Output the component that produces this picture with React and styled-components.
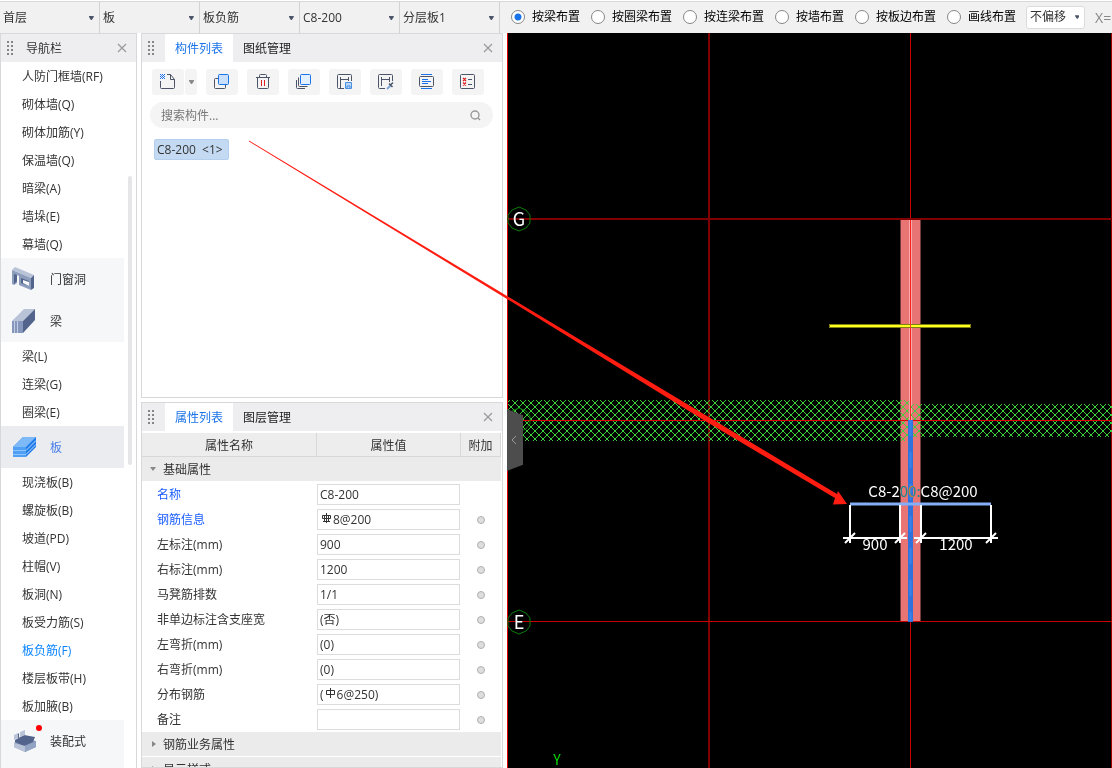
import React, { useState } from 'react'
import styled, { createGlobalStyle } from 'styled-components'

const GlobalStyle = createGlobalStyle`
    * {
        box-sizing: border-box;
    }

    body {
        margin: 0;
        background: #fff;
        overflow: hidden;
    }

    body, input, select, button {
        font-family: "Open Sans", "Noto Sans CJK SC", sans-serif;
        font-size: 12px;
        line-height: 18px;
        color: #333;
    }
`

const levels = [
    ['楼层', '首层'],
    ['构件类型', '板'],
    ['构件', '板负筋'],
    ['名称', 'C8-200'],
    ['分层', '分层板1'],
]

const modes = ['按梁布置', '按圈梁布置', '按连梁布置', '按墙布置', '按板边布置', '画线布置']

const navItems = [
    { text: '人防门框墙(RF)' },
    { text: '砌体墙(Q)' },
    { text: '砌体加筋(Y)' },
    { text: '保温墙(Q)' },
    { text: '暗梁(A)' },
    { text: '墙垛(E)' },
    { text: '幕墙(Q)' },
    { text: '门窗洞', icon: 'opening' },
    { text: '梁', icon: 'beam' },
    { text: '梁(L)' },
    { text: '连梁(G)' },
    { text: '圈梁(E)' },
    { text: '板', icon: 'slab', open: true },
    { text: '现浇板(B)' },
    { text: '螺旋板(B)' },
    { text: '坡道(PD)' },
    { text: '柱帽(V)' },
    { text: '板洞(N)' },
    { text: '板受力筋(S)' },
    { text: '板负筋(F)', active: true },
    { text: '楼层板带(H)' },
    { text: '板加腋(B)' },
    { text: '装配式', icon: 'prefab', badge: true },
    { text: '', icon: 'none' },
]

const properties = [
    { name: '名称', value: 'C8-200', link: true, noDot: true },
    { name: '钢筋信息', value: '8@200', link: true, rebar: 'C' },
    { name: '左标注(mm)', value: '900' },
    { name: '右标注(mm)', value: '1200' },
    { name: '马凳筋排数', value: '1/1' },
    { name: '非单边标注含支座宽', value: '(否)' },
    { name: '左弯折(mm)', value: '(0)' },
    { name: '右弯折(mm)', value: '(0)' },
    { name: '分布钢筋', value: '6@250)', prefix: '(', rebar: 'A' },
    { name: '备注', value: '' },
]

/* ---------- icons ---------- */

const Caret = ({ color = '#4c5568' }) => (
    <svg width="5" height="4" viewBox="0 0 5 4"><path d="M0 0H5V1L3 4H2L0 1Z" fill={color} /></svg>
)

const CloseIcon = () => (
    <svg width="10" height="10" viewBox="0 0 10 10"><path d="M1 1L9 9M9 1L1 9" stroke="#999" strokeWidth="1.2" /></svg>
)

const Grip = () => (
    <svg width="7" height="15" viewBox="0 0 7 15" fill="#858585">
        {[0, 4, 8, 12].map((y) => (
            <React.Fragment key={y}>
                <rect x="0" y={y} width="2" height="2" />
                <rect x="4" y={y} width="2" height="2" />
            </React.Fragment>
        ))}
    </svg>
)

const toolIcons = {
    new: (
        <>
            <path d="M7 0.5H10.5L14.5 5.5V13.5Q14.5 14.5 13.5 14.5H1.5Q0.5 14.5 0.5 13.5V7" />
            <path d="M10.5 0.5V5.5H14.5" />
            <path d="M0 0.5H5M0 2.5H5M0 4.5H5" stroke="#1a73e8" strokeDasharray="1 1" />
            <path d="M1 1.5H5M1 3.5H5" stroke="#1a73e8" strokeDasharray="1 1" />
        </>
    ),
    copy: (
        <>
            <path d="M4.5 4.5H1.5Q0.5 4.5 0.5 5.5V13.5Q0.5 14.5 1.5 14.5H10.5Q11.5 14.5 11.5 13.5V10.5" />
            <rect x="4.5" y="0.5" width="10" height="10" rx="1" fill="#c9dffa" stroke="#1a73e8" />
        </>
    ),
    remove: (
        <>
            <path d="M1 3.5H15M4.5 3V1.5Q4.5 0.5 5.5 0.5H10.5Q11.5 0.5 11.5 1.5V3" />
            <path d="M2.5 4V13.5Q2.5 14.5 3.5 14.5H12.5Q13.5 14.5 13.5 13.5V4" />
            <path d="M6.5 6V12M9.5 6V12" stroke="#e02020" />
        </>
    ),
    layers: (
        <>
            <rect x="4.5" y="0.5" width="10" height="10" rx="1" fill="#e3f0ff" stroke="#1a73e8" />
            <path d="M2.5 3.5V11.5Q2.5 12.5 3.5 12.5H11.5M0.5 6V13.5Q0.5 14.5 1.5 14.5H9" />
        </>
    ),
    save: (
        <>
            <path d="M7 14.5H1.5Q0.5 14.5 0.5 13.5V1.5Q0.5 0.5 1.5 0.5H13.5Q14.5 0.5 14.5 1.5V7" />
            <path d="M3.5 3V15M3.5 5.5H11.5M11.5 3V7" />
            <path d="M8.5 8.5H14.5V14.5H8.5ZM10 14V12H13V14" fill="#b9d5f8" stroke="#4a90e2" />
        </>
    ),
    pick: (
        <>
            <path d="M7 14.5H1.5Q0.5 14.5 0.5 13.5V1.5Q0.5 0.5 1.5 0.5H13.5Q14.5 0.5 14.5 1.5V7" />
            <path d="M3.5 3V12M3.5 5.5H11.5M11.5 3V8" />
            <path d="M9 15L13 11" stroke="#7fa5d8" strokeWidth="2" />
            <path d="M11 9.5L14.5 13M12.5 11L15 8.5" strokeWidth="1.5" />
        </>
    ),
    align: (
        <>
            <rect x="0.5" y="2.5" width="14" height="10" rx="1" />
            <path d="M2 0.5H13M2 14.5H13M3 5.5H9M3 7.5H12M3 9.5H9" stroke="#1a73e8" />
        </>
    ),
    check: (
        <>
            <rect x="0.5" y="0.5" width="14" height="14" rx="1" />
            <path d="M3 4L6 7M6 4L3 7M3 8.5L6 11.5M6 8.5L3 11.5" stroke="#e02020" strokeWidth="1.3" />
            <path d="M8 5.5H12M8 10.5H12" />
        </>
    ),
}

const ToolIcon = ({ name }) => (
    <svg width="16" height="16" viewBox="0 0 16 16" fill="none" stroke="#4c5568">{toolIcons[name]}</svg>
)

const navIcons = {
    opening: (
        <>
            <path d="M0 3L3 0L22 8L19 11Z" fill="#b9c3d8" />
            <path d="M0 3L19 11V23L7 18V9L5 8V16L2 18L0 17Z" fill="#8c9cbd" />
            <path d="M19 11L22 8V21L19 23Z" fill="#53648c" />
            <path d="M2 7L5 8V14L2 17ZM9 11L17 14V19L9 16Z" fill="#53648c" />
            <path d="M11 13L17 15V19L11 16Z" fill="#f5f7f9" />
        </>
    ),
    beam: (
        <>
            <path d="M0 12L12 0H23L11 12Z" fill="#b9c3d8" />
            <path d="M11 12L23 0V11L11 24Z" fill="#53648c" />
            <path d="M0 12H11V24H0Z" fill="#8496bc" />
            <path d="M2.5 12V24M5.5 12V24" stroke="#c3cde2" />
        </>
    ),
    slab: (
        <>
            <path d="M1 12L11 2H24V12L14 22H1Z" fill="#1f7bea" />
            <path d="M1 12L11 2H24L14 12Z" fill="#7db8f7" />
            <path d="M1 12H14V22H1Z" fill="#4f9ff5" />
            <path d="M1 15.5H14M1 19.5H14" stroke="#8cc4fb" fill="none" />
            <path d="M14 15.5L24 5.5M14 19.5L24 9.5" stroke="#b6dafc" fill="none" />
        </>
    ),
    prefab: (
        <>
            <path d="M2 14L9 9L24 12V18L13 23L2 18Z" fill="#8c9cbd" />
            <path d="M3 11L12 6L23 8L21 13L12 17L3 13Z" fill="#53648c" />
            <path d="M2 14L13 17V23L2 18Z" fill="#b9c3d8" />
            <path d="M13 17L24 13V18L13 23Z" fill="#93a3c4" />
            <path d="M2 6L6 4V9L2 11ZM8 3L13 1V6L8 8Z" fill="#b9c3d8" />
            <path d="M6 4L7 5V9L6 9Z" fill="#53648c" />
        </>
    ),
}

const NavIcon = ({ name }) => (
    <svg width="24" height="24" viewBox="0 0 24 24">{navIcons[name]}</svg>
)

const RebarIcon = ({ grade }) => (
    <svg width="11" height="14" viewBox="0 0 11 14" fill="none" stroke="#333">
        {grade === 'C' ? (
            <path d="M1.5 2.5H9.5V5.5H1.5ZM5.5 0V10M3.5 2V8M7.5 2V8M2 8.5H9" />
        ) : (
            <path d="M1.5 2.5H9.5V6.5H1.5ZM5.5 0V10" />
        )}
    </svg>
)

/* ---------- top bar ---------- */

function TopBar() {
    const [mode, setMode] = useState(modes[0])
    return (
        <Bar>
            {levels.map(([label, value]) => (
                <LevelBox key={label}>
                    <Select aria-label={label} defaultValue={value}>
                        <option>{value}</option>
                    </Select>
                    <Caret />
                </LevelBox>
            ))}
            <Modes>
                {modes.map((m) => (
                    <Mode key={m}>
                        <input type="radio" name="mode" checked={mode === m} onChange={() => setMode(m)} />
                        {m}
                    </Mode>
                ))}
            </Modes>
            <OffsetBox>
                <Select aria-label="偏移" defaultValue="不偏移">
                    <option>不偏移</option>
                </Select>
                <Caret />
            </OffsetBox>
            <AxisLabel>X=</AxisLabel>
        </Bar>
    )
}

/* ---------- navigation ---------- */

function Navigation() {
    return (
        <NavPanel>
            <PanelHeader>
                <Grip />
                <PanelTitle>导航栏</PanelTitle>
                <CloseButton aria-label="关闭"><CloseIcon /></CloseButton>
            </PanelHeader>
            <NavList>
                {navItems.map((item, i) => item.icon ? (
                    <NavGroup key={i} $open={item.open}>
                        <NavIcon name={item.icon} />
                        <span>{item.text}</span>
                        {item.badge && <Badge />}
                    </NavGroup>
                ) : (
                    <NavItem key={i} $active={item.active}>{item.text}</NavItem>
                ))}
                <ScrollThumb />
            </NavList>
        </NavPanel>
    )
}

/* ---------- middle panels ---------- */

function Tabs({ tabs }) {
    return (
        <PanelHeader>
            <Grip />
            <TabList>
                {tabs.map((tab, i) => <Tab key={tab} $active={i === 0}>{tab}</Tab>)}
            </TabList>
            <CloseButton aria-label="关闭"><CloseIcon /></CloseButton>
        </PanelHeader>
    )
}

function ComponentPanel() {
    return (
        <Panel>
            <Tabs tabs={['构件列表', '图纸管理']} />
            <Toolbar>
                <SplitButton>
                    <ToolButton aria-label="新建"><ToolIcon name="new" /></ToolButton>
                    <DropButton aria-label="更多"><Caret color="#8a8a8a" /></DropButton>
                </SplitButton>
                <ToolButton aria-label="复制"><ToolIcon name="copy" /></ToolButton>
                <ToolButton aria-label="删除"><ToolIcon name="remove" /></ToolButton>
                <ToolButton aria-label="层间复制"><ToolIcon name="layers" /></ToolButton>
                <ToolButton aria-label="存档"><ToolIcon name="save" /></ToolButton>
                <ToolButton aria-label="提取"><ToolIcon name="pick" /></ToolButton>
                <ToolButton aria-label="排序"><ToolIcon name="align" /></ToolButton>
                <ToolButton aria-label="检查"><ToolIcon name="check" /></ToolButton>
            </Toolbar>
            <Search>
                <input type="text" aria-label="搜索构件" placeholder="搜索构件..." />
                <svg width="11" height="12" viewBox="0 0 11 12" fill="none" stroke="#999" strokeWidth="1.4">
                    <circle cx="5" cy="6" r="4" />
                    <path d="M8 9L10 11" />
                </svg>
            </Search>
            <ComponentItem>C8-200 &nbsp;&lt;1&gt;</ComponentItem>
        </Panel>
    )
}

function PropertyPanel() {
    return (
        <Panel>
            <Tabs tabs={['属性列表', '图层管理']} />
            <PropertyTable>
                <colgroup>
                    <col />
                    <col width="144" />
                    <col width="40" />
                </colgroup>
                <thead>
                    <tr>
                        <th>属性名称</th>
                        <th>属性值</th>
                        <th>附加</th>
                    </tr>
                </thead>
                <tbody>
                    <GroupRow>
                        <td colSpan="3">
                            <svg width="8" height="8" viewBox="0 0 8 8"><path d="M1 1H7L4 5Z" fill="#888" /></svg>
                            基础属性
                        </td>
                    </GroupRow>
                    {properties.map((p, i) => (
                        <tr key={p.name}>
                            <NameCell $link={p.link}><label htmlFor={`prop-${i}`}>{p.name}</label></NameCell>
                            <td>
                                <ValueBox>
                                    {p.prefix}
                                    {p.rebar && <RebarIcon grade={p.rebar} />}
                                    <input id={`prop-${i}`} type="text" defaultValue={p.value} />
                                </ValueBox>
                            </td>
                            <td>{!p.noDot && <Dot />}</td>
                        </tr>
                    ))}
                    {['钢筋业务属性', '显示样式'].map((name) => (
                        <GroupRow key={name}>
                            <td colSpan="3">
                                <svg width="8" height="8" viewBox="0 0 8 8"><path d="M3 0L7 3L3 6Z" fill="#888" /></svg>
                                {name}
                            </td>
                        </GroupRow>
                    ))}
                </tbody>
            </PropertyTable>
        </Panel>
    )
}

/* ---------- drawing ---------- */

const AxisBubble = ({ y, children }) => (
    <g>
        <polygon
            points={`12,${y - 12} 19,${y - 9} 23,${y - 4} 23,${y + 4} 19,${y + 9} 12,${y + 12} 5,${y + 9} 1,${y + 4} 1,${y - 4} 5,${y - 9}`}
            fill="none"
            stroke="#0a7d0a"
        />
        <text x="12" y={y + 7} textAnchor="middle" fontSize="18" fill="#fff">{children}</text>
    </g>
)

function Drawing() {
    return (
        <Canvas>
            <svg width="100%" height="100%">
                <defs>
                    <pattern id="hatch" width="8" height="8" x="0" y="2" patternUnits="userSpaceOnUse">
                        <path d="M0 0L8 8M8 0L0 8" stroke="#3cd03c" strokeWidth="1" shapeRendering="crispEdges" />
                    </pattern>
                </defs>
                <rect width="1" height="100%" fill="#e00000" />
                <rect x="201" width="2" height="100%" fill="#800000" />
                <rect x="403" width="1" height="100%" fill="#c80000" />
                <rect x="604" width="1" height="100%" fill="#a00000" />

                <rect x="393" y="186" width="21" height="403" fill="#733a3a" />
                <rect x="394" y="186" width="19" height="403" fill="#e87474" />
                <rect x="402" y="186" width="3" height="202" fill="#f8a8a8" />
                <rect x="403" y="186" width="1" height="202" fill="#ff2020" />

                <rect x="1" y="367" width="401" height="41" fill="url(#hatch)" />
                <rect x="404" y="371" width="100%" height="33" fill="url(#hatch)" />

                <rect y="185" width="100%" height="2" fill="#800000" />
                <rect y="387" width="100%" height="1" fill="#e00000" />
                <rect y="588" width="100%" height="1" fill="#c80000" />

                <rect x="401" y="387" width="5" height="202" fill="#2f72dc" />
                <path d="M403.5 387V588" stroke="#3884ea" strokeWidth="2" strokeDasharray="16 16" />

                <path d="M322 293H464" stroke="#808010" strokeWidth="4" />
                <path d="M323 293H463" stroke="#ffff20" strokeWidth="2" />
                <rect x="403" y="291" width="1" height="4" fill="#ff4020" />

                <path d="M343 471H484" stroke="#84aef8" strokeWidth="3" />
                <g stroke="#fff" strokeWidth="2">
                    <path d="M343 472V510M393 472V510M414 472V510M484 472V510" />
                    <path d="M336 505H400M407 505H491" />
                    <path d="M338 510L348 500M388 510L398 500M409 510L419 500M479 510L489 500" />
                </g>

                <AxisBubble y={186}>G</AxisBubble>
                <AxisBubble y={387} />
                <AxisBubble y={589}>E</AxisBubble>

                <DimText x="416" y="464">C8-200:C8@200</DimText>
                <DimText x="368" y="517">900</DimText>
                <DimText x="449" y="517">1200</DimText>
                <text x="50" y="732" textAnchor="middle" fontSize="14" fill="#00e000">Y</text>
            </svg>
            <Collapse aria-label="收起">
                <svg width="6" height="10" viewBox="0 0 6 10" fill="none" stroke="#999"><path d="M5 1L1 5L5 9" /></svg>
            </Collapse>
        </Canvas>
    )
}

function App() {
    return (
        <Page>
            <GlobalStyle />
            <TopBar />
            <Navigation />
            <Middle>
                <ComponentPanel />
                <PropertyPanel />
            </Middle>
            <Drawing />
            <Pointer width="860" height="520" fill="#ff1d12">
                <path d="M249 140.5L507 296L837 494L838 491L847 504L833 504.5L835 498L706 421.5L507 299L249 141.5Z" />
            </Pointer>
        </Page>
    )
}

export default App

const Page = styled.div`
    position: relative;
    display: grid;
    grid-template-columns: 137px 362px minmax(0, 1fr);
    grid-template-rows: 33px minmax(0, 1fr);
    column-gap: 4px;
    height: 100vh;
`

const Bar = styled.header`
    grid-column: 1 / -1;
    display: flex;
    align-items: center;
    margin-top: 1px;
    background: #f1f1f1;
    border-top: 1px solid #d6dad8;
    overflow: hidden;
    white-space: nowrap;
`

const Select = styled.select`
    appearance: none;
    width: 100%;
    border: 0;
    padding: 0;
    background: transparent;
    outline: none;
`

const LevelBox = styled.div`
    flex: none;
    display: flex;
    align-items: center;
    width: 100px;
    height: 100%;
    padding: 0 5px 0 3px;
    border-right: 1px solid #d2d2d2;
`

const Modes = styled.div`
    display: flex;
    gap: 11px;
    padding: 0 10px 2px 11px;
`

const Mode = styled.label`
    display: flex;
    align-items: center;
    gap: 7px;
    color: #000;

    input {
        appearance: none;
        width: 14px;
        height: 14px;
        margin: 0;
        border: 1px solid #868686;
        border-radius: 50%;
        background: #fff;
    }

    input:checked {
        background: radial-gradient(circle, #1a73e8 3px, #fff 4px);
    }
`

const OffsetBox = styled.div`
    flex: none;
    display: flex;
    align-items: center;
    width: 59px;
    height: 23px;
    margin-bottom: 1px;
    padding: 0 5px 0 3px;
    background: #fff;
    border: 1px solid #dcdcdc;
    border-radius: 3px;
`

const AxisLabel = styled.span`
    margin-left: 10px;
    font-size: 14px;
    color: #888;
`

const NavPanel = styled.nav`
    display: flex;
    flex-direction: column;
    min-height: 0;
    border: 1px solid #d8d8da;
    border-bottom: 0;
`

const PanelHeader = styled.div`
    flex: none;
    display: flex;
    align-items: center;
    height: 28px;
    padding-left: 6px;
    background: #eeeef0;
`

const PanelTitle = styled.span`
    margin-left: 12px;
    padding-top: 2px;
`

const CloseButton = styled.button`
    display: flex;
    margin: 0 9px 0 auto;
    padding: 0;
    border: 0;
    background: none;
`

const NavList = styled.div`
    position: relative;
    flex: 1;
    min-height: 0;
    overflow: hidden;
    padding-right: 12px;
`

const NavItem = styled.div`
    height: 28px;
    padding-left: 21px;
    line-height: 30px;
    color: ${(p) => (p.$active ? '#0a84ff' : '#333')};
`

const NavGroup = styled.div`
    position: relative;
    display: flex;
    align-items: center;
    gap: 14px;
    height: 42px;
    padding-left: 11px;
    background: ${(p) => (p.$open ? '#ebecf0' : '#f5f7f9')};
    color: ${(p) => (p.$open ? '#4a80e8' : '#333')};

    span {
        padding-top: 2px;
    }
`

const Badge = styled.i`
    position: absolute;
    left: 35px;
    top: 5px;
    width: 6px;
    height: 6px;
    border-radius: 50%;
    background: #f00;
`

const ScrollThumb = styled.div`
    position: absolute;
    right: 4px;
    top: 114px;
    width: 4px;
    height: 289px;
    border-radius: 2px;
    background: #e6e6e8;
`

const Middle = styled.div`
    display: grid;
    grid-template-rows: minmax(0, 1fr) 366px;
    gap: 4px;
    min-height: 0;
`

const Panel = styled.section`
    display: flex;
    flex-direction: column;
    min-height: 0;
    overflow: hidden;
    border: 1px solid #d8d8da;
`

const TabList = styled.div`
    display: flex;
    height: 100%;
    margin-left: 10px;
`

const Tab = styled.button`
    height: 100%;
    padding: 2px 10px 0;
    border: 0;
    background: ${(p) => (p.$active ? '#fff' : 'none')};
    color: ${(p) => (p.$active ? '#1a73e8' : '#222')};
`

const Toolbar = styled.div`
    display: flex;
    gap: 9px;
    padding: 7px 10px;
`

const SplitButton = styled.div`
    display: flex;
    gap: 1px;
`

const ToolButton = styled.button`
    display: flex;
    align-items: center;
    justify-content: center;
    width: 32px;
    height: 26px;
    padding: 0;
    border: 0;
    border-radius: 3px;
    background: #f4f4f5;
`

const DropButton = styled(ToolButton)`
    width: 12px;
`

const Search = styled.div`
    display: flex;
    align-items: center;
    height: 26px;
    margin: 0 9px 0 8px;
    padding: 0 12px 0 11px;
    border-radius: 13px;
    background: #f4f4f5;

    input {
        flex: 1;
        padding: 2px 0 0;
        border: 0;
        outline: none;
        background: none;
    }

    input::placeholder {
        color: #777;
    }
`

const ComponentItem = styled.div`
    align-self: flex-start;
    margin: 11px 12px;
    padding: 0 5px 0 2px;
    border: 1px solid #b4d0ee;
    border-radius: 2px;
    background: #c4daf2;
    line-height: 19px;
`

const PropertyTable = styled.table`
    width: calc(100% - 1px);
    margin-top: 2px;
    table-layout: fixed;
    border-collapse: separate;
    border-spacing: 0;

    th {
        height: 24px;
        padding: 2px 0 0;
        background: #ededee;
        border-right: 1px solid #d8d8da;
        border-bottom: 1px solid #d8d8da;
        font-weight: 400;
    }

    td {
        height: 25px;
        padding: 0;
    }
`

const GroupRow = styled.tr`
    && td {
        padding: 2px 0 0 7px;
        background: #ebebeb;
        border-bottom: 1px solid #fff;
    }

    svg {
        margin-right: 6px;
    }
`

const NameCell = styled.td`
    && {
        padding-left: 15px;
        color: ${(p) => (p.$link ? '#1a5cff' : '#333')};
    }
`

const ValueBox = styled.div`
    display: flex;
    align-items: center;
    width: 143px;
    height: 21px;
    padding-left: 2px;
    border: 1px solid #dcdcde;
    background: #fff;

    svg {
        flex: none;
        margin: 0 1px;
    }

    input {
        flex: 1;
        min-width: 0;
        padding: 0;
        border: 0;
        outline: none;
        background: none;
    }
`

const Dot = styled.div`
    width: 8px;
    height: 8px;
    margin: 0 auto;
    border: 1px solid #b0b0b0;
    border-radius: 50%;
    background: #dedede;
`

const Canvas = styled.main`
    position: relative;
    min-width: 0;
    background: #000;
    overflow: hidden;

    > svg {
        display: block;
        font-family: "Noto Sans CJK SC", sans-serif;
    }
`

const DimText = styled.text`
    fill: #fff;
    font-size: 15px;
    font-weight: 400;
    text-anchor: middle;
    mix-blend-mode: difference;
`

const Collapse = styled.button`
    position: absolute;
    left: 0;
    top: 376px;
    display: flex;
    align-items: center;
    width: 16px;
    height: 62px;
    padding: 0 4px;
    border: 0;
    background: #4d4d4d;
    clip-path: polygon(0 0, 100% 10%, 100% 90%, 0 100%);
`

const Pointer = styled.svg`
    position: absolute;
    left: 0;
    top: 0;
    pointer-events: none;
`
